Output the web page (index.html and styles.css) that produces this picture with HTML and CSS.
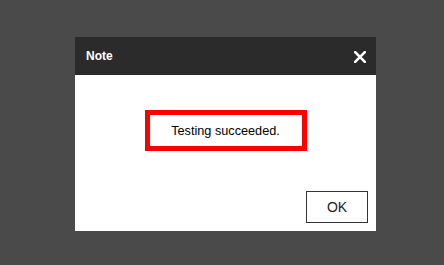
FILE: index.html
```html
<!DOCTYPE html>
<html>
<head>
<meta charset="utf-8">
<link rel="stylesheet" href="styles.css">
</head>
<body>
<div class="dialog">
  <div class="header">
    <span class="title">Note</span>
    <svg class="close" width="12" height="12" viewBox="0 0 12 12"><path d="M1.2 1.2 L10.8 10.8 M10.8 1.2 L1.2 10.8" stroke="#fff" stroke-width="2.6" stroke-linecap="square"/></svg>
  </div>
  <div class="content">
    <div class="message">Testing succeeded.</div>
    <div class="footer"><button class="ok">OK</button></div>
  </div>
</div>
</body>
</html>
```
FILE: styles.css
```css
html, body { margin: 0; padding: 0; }
body {
  background: #4a4a4a;
  width: 444px;
  height: 265px;
  font-family: "Liberation Sans", Arial, sans-serif;
  padding: 37px 0 0 75px;
  box-sizing: border-box;
}
.dialog {
  width: 301px;
  height: 194px;
  background: #fff;
  display: flex;
  flex-direction: column;
}
.header {
  height: 38px;
  background: #2b2b2b;
  display: flex;
  align-items: center;
  justify-content: space-between;
  padding: 0 10px 0 11px;
}
.title {
  color: #fff;
  font-weight: bold;
  font-size: 12px;
}
.close { display: block; margin-top: 1px; }
.content {
  flex: 1;
  display: flex;
  flex-direction: column;
  align-items: center;
  padding-top: 35px;
}
.message {
  width: 162px;
  height: 41px;
  box-sizing: border-box;
  border: 5px solid #ff0000;
  display: flex;
  align-items: center;
  justify-content: center;
  font-size: 12.7px;
  color: #000;
  padding-top: 1px;
}
.footer {
  align-self: stretch;
  display: flex;
  justify-content: flex-end;
  padding: 40px 8px 0 0;
}
.ok {
  width: 62px;
  height: 32px;
  background: #fff;
  border: 1px solid #333;
  font-family: "Liberation Sans", Arial, sans-serif;
  font-size: 14px;
  color: #222;
  padding: 0;
}
```
